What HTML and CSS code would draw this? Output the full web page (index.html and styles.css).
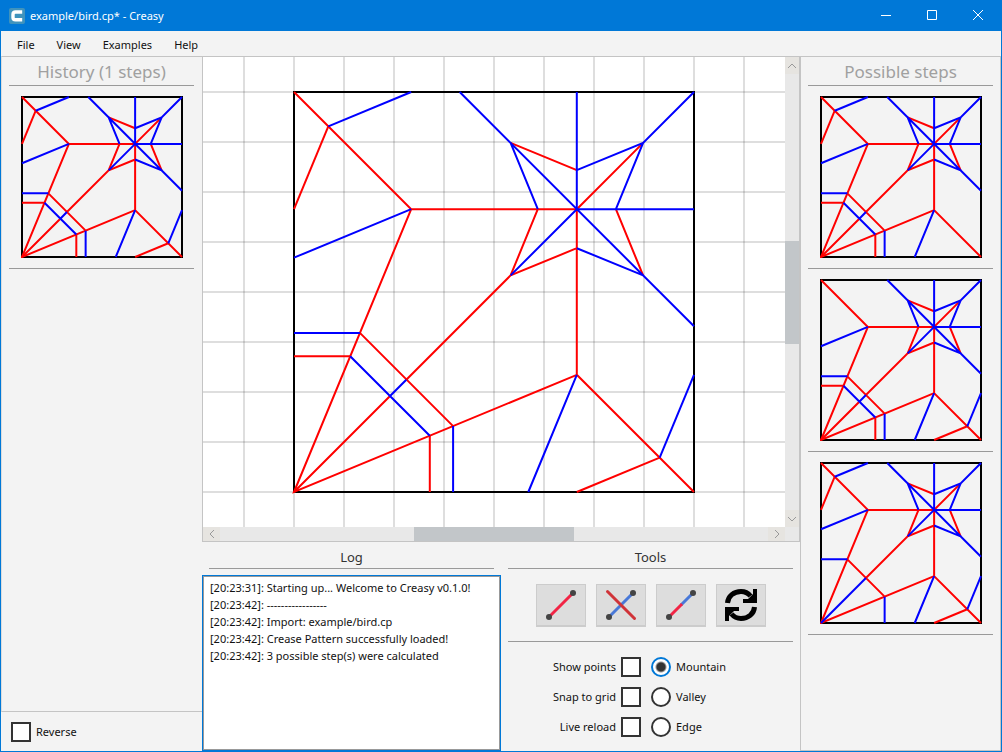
FILE: index.html
```html
<!DOCTYPE html>
<html lang="en">
<head>
<meta charset="utf-8">
<title>example/bird.cp* - Creasy</title>
<link rel="stylesheet" href="styles.css">
</head>
<body>
<svg class="defs" aria-hidden="true">
  <defs>
    <pattern id="grid" width="50" height="50" patternUnits="userSpaceOnUse">
      <path class="grid-line" d="M0 0V50M50 0V50"/>
      <path class="grid-line" d="M0 0H50M0 50H50"/>
    </pattern>
    <g id="frame"><path class="edge" d="M0 0H400V400H0Z"/></g>
    <g id="base">
      <path class="mountain" d="M0 0L117.2 117.2H282.8V282.8L400 400M117.2 117.2L0 400L282.8 282.8M112.3 287.7L216.6 183.4L282.8 156.2M216.6 183.4L243.8 117.2M216.6 50.9L282.8 78.1M282.8 117.2L349.1 50.9M321.9 117.2L349.1 183.4M65.9 240.9L159.1 334.1"/>
      <path class="valley" d="M117.2 117.2L0 165.7M165.7 0L400 234.3M282.8 0V117.2H400M400 0L349.1 50.9L282.8 78.1M349.1 50.9L321.9 117.2M349.1 183.4L282.8 156.2M216.6 183.4L282.8 117.2M243.8 117.2L216.6 50.9M282.8 282.8L234.3 400M0 240.9H65.9M159.1 334.1V400"/>
    </g>
    <g id="top-fold">
      <path class="mountain" d="M34.3 34.3L0 117.2"/>
      <path class="valley" d="M34.3 34.3L117.2 0"/>
    </g>
    <g id="corner-fold">
      <path class="mountain" d="M365.7 365.7L282.8 400"/>
      <path class="valley" d="M365.7 365.7L400 282.8"/>
    </g>
    <g id="pleat">
      <path class="mountain" d="M0 264.2H56.2M135.8 343.8V400M0 400L95.8 304.2"/>
      <path class="valley" d="M56.2 264.2L135.8 343.8M95.8 304.2L112.3 287.7"/>
    </g>
    <g id="flat-tip"><path class="valley" d="M0 400L112.3 287.7"/></g>
  </defs>
</svg>

<div class="window">
  <header class="titlebar">
    <svg class="logo" viewBox="0 0 16 16" aria-hidden="true">
      <rect class="logo-bg" width="16" height="16" rx="2"/>
      <path class="logo-c" d="M13.2 4H6.5Q4 4 4 6.4V9.4Q4 11.8 6.5 11.8H13.2"/>
    </svg>
    <h1 class="title">example/bird.cp* - Creasy</h1>
    <div class="window-buttons">
      <button aria-label="Minimize"><svg viewBox="0 0 12 12"><path d="M1 5.5H11"/></svg></button>
      <button aria-label="Maximize"><svg viewBox="0 0 12 12"><path d="M1.5 .5H10.5V9.5H1.5Z"/></svg></button>
      <button aria-label="Close"><svg viewBox="0 0 12 12"><path d="M1 0L11 10M11 0L1 10"/></svg></button>
    </div>
  </header>

  <nav class="menubar">
    <button>File</button><button>View</button><button>Examples</button><button>Help</button>
  </nav>

  <main class="workspace">
    <aside class="side history">
      <div class="steps">
        <h2>History (1 steps)</h2>
        <div class="step"><svg viewBox="-2.5 -2.5 405 405"><use href="#frame"/><use href="#base"/><use href="#top-fold"/><use href="#corner-fold"/><use href="#pleat"/></svg></div>
      </div>
      <div class="reverse"><label class="option"><input type="checkbox">Reverse</label></div>
    </aside>

    <section class="center">
      <div class="viewport">
        <svg class="canvas" viewBox="-91 -35 582 470" preserveAspectRatio="xMidYMid slice">
          <rect x="-200" y="-200" width="800" height="800" fill="url(#grid)"/>
          <use href="#frame"/><use href="#base"/><use href="#top-fold"/><use href="#corner-fold"/><use href="#pleat"/>
        </svg>
        <div class="scroll vertical">
          <button aria-label="Scroll up"><svg viewBox="0 0 10 10"><path d="M1 7L5 3L9 7"/></svg></button>
          <div class="track"><div class="thumb"></div></div>
          <button aria-label="Scroll down"><svg viewBox="0 0 10 10"><path d="M1 3L5 7L9 3"/></svg></button>
        </div>
        <div class="scroll horizontal">
          <button aria-label="Scroll left"><svg viewBox="0 0 10 10"><path d="M7 1L3 5L7 9"/></svg></button>
          <div class="track"><div class="thumb"></div></div>
          <button aria-label="Scroll right"><svg viewBox="0 0 10 10"><path d="M3 1L7 5L3 9"/></svg></button>
        </div>
        <div class="scroll-corner"></div>
      </div>

      <div class="bottom">
        <section class="log">
          <h3>Log</h3>
          <textarea aria-label="Log" readonly>[20:23:31]: Starting up... Welcome to Creasy v0.1.0!
[20:23:42]: -----------------
[20:23:42]: Import: example/bird.cp
[20:23:42]: Crease Pattern successfully loaded!
[20:23:42]: 3 possible step(s) were calculated</textarea>
        </section>
        <section class="tools">
          <h3>Tools</h3>
          <div class="toolbar">
            <button aria-label="Add crease"><svg viewBox="0 0 32 32"><path class="red" d="M4 28L28 4"/><circle cx="4" cy="28" r="3"/><circle cx="28" cy="4" r="3"/></svg></button>
            <button aria-label="Delete crease"><svg viewBox="0 0 32 32"><path class="blue" d="M4 28L28 4"/><circle cx="4" cy="28" r="3"/><circle cx="28" cy="4" r="3"/><path class="cross" d="M2.5 2.5L29.5 29.5"/></svg></button>
            <button aria-label="Change crease type"><svg viewBox="0 0 32 32"><path class="blue" d="M16 16L28 4"/><path class="red" d="M4 28L17 15"/><circle cx="4" cy="28" r="3"/><circle cx="28" cy="4" r="3"/></svg></button>
            <button aria-label="Recalculate steps"><svg viewBox="0 0 32 32"><path class="arc" d="M2.5 14C3 7 9 2.6 16 2.6C20 2.6 23 4 25.5 7M29.5 18C29 25 23 29.4 16 29.4C12 29.4 9 28 6.5 25"/><path class="tip" d="M32 0V14H18V10H23L28 5V0ZM0 32V18H14V22H9L4 27V32Z"/></svg></button>
          </div>
          <div class="options">
            <label class="option before">Show points<input type="checkbox"></label>
            <label class="option"><input type="radio" name="type" checked>Mountain</label>
            <label class="option before">Snap to grid<input type="checkbox"></label>
            <label class="option"><input type="radio" name="type">Valley</label>
            <label class="option before">Live reload<input type="checkbox"></label>
            <label class="option"><input type="radio" name="type">Edge</label>
          </div>
        </section>
      </div>
    </section>

    <aside class="side possible">
      <div class="steps">
        <h2>Possible steps</h2>
        <div class="step"><svg viewBox="-2.5 -2.5 405 405"><use href="#frame"/><use href="#base"/><use href="#top-fold"/><use href="#pleat"/></svg></div>
        <div class="step"><svg viewBox="-2.5 -2.5 405 405"><use href="#frame"/><use href="#base"/><use href="#corner-fold"/><use href="#pleat"/></svg></div>
        <div class="step"><svg viewBox="-2.5 -2.5 405 405"><use href="#frame"/><use href="#base"/><use href="#top-fold"/><use href="#corner-fold"/><use href="#flat-tip"/></svg></div>
      </div>
    </aside>
  </main>
</div>
</body>
</html>
```

FILE: styles.css
```css
* { box-sizing: border-box; }
body {
  margin: 0;
  font: 11px/16px "Noto Sans", "Open Sans", sans-serif;
  color: #111;
}
button { font: inherit; color: inherit; border: 0; background: none; padding: 0; }
svg { display: block; }
.defs { position: absolute; width: 0; height: 0; }

.window {
  display: flex;
  flex-direction: column;
  height: 100vh;
  border: 1px solid #0078d7;
  background: #f3f3f3;
}

.titlebar {
  display: flex;
  align-items: center;
  height: 30px;
  padding-left: 8px;
  background: #0078d7;
  color: #fff;
}
.logo { width: 16px; height: 16px; }
.logo-bg { fill: #3f93bd; }
.logo-c { fill: none; stroke: #fff; stroke-width: 3.4; }
.title { flex: 1; margin: 0 0 0 5px; font-size: 11px; font-weight: 400; }
.window-buttons { display: flex; }
.window-buttons button {
  display: grid;
  place-items: center;
  width: 46px;
  height: 28px;
}
.window-buttons svg { width: 12px; height: 12px; fill: none; stroke: #fff; }

.menubar { display: flex; height: 25px; padding-left: 5px; }
.menubar button { padding: 2px 11px 0; }

.workspace {
  flex: 1;
  min-height: 0;
  display: grid;
  grid-template-columns: 201px minmax(0, 1fr) 201px;
}
.side { display: flex; flex-direction: column; min-height: 0; }
.steps { flex: 1; border: 1px solid #c4c4c4; }
.history .steps { border-left-color: #dcdcdc; border-right: 0; padding-right: 1px; }
.steps h2 {
  margin: 0 7px 10px;
  padding-top: 2px;
  border-bottom: 1px solid #999;
  font-size: 17px;
  font-weight: 400;
  line-height: 26px;
  text-align: center;
  color: #a0a0a0;
}
.step {
  margin: 0 7px 10px;
  padding-bottom: 10px;
  border-bottom: 1px solid #999;
}
.step svg { width: 162px; height: 162px; margin: 0 auto; }
.reverse { height: 39px; padding: 10px; }

.edge, .mountain, .valley {
  fill: none;
  stroke-width: 2px;
  vector-effect: non-scaling-stroke;
}
.edge { stroke: #000; }
.mountain { stroke: #f00; }
.valley { stroke: #00f; }
.grid-line { stroke: rgba(0, 0, 0, .13); stroke-width: 2px; fill: none; }

.center { display: flex; flex-direction: column; min-width: 0; min-height: 0; }
.viewport {
  flex: 1;
  min-height: 0;
  display: grid;
  grid-template: minmax(0, 1fr) 14px / minmax(0, 1fr) 14px;
  border: 1px solid #c4c4c4;
}
.canvas { width: 100%; height: 100%; background: #fff; }
.scroll { display: flex; background: #e8e8e8; }
.vertical { flex-direction: column; }
.scroll button { display: grid; place-items: center; background: #e6e4e0; }
.vertical button { height: 17px; }
.horizontal button { width: 17px; }
.scroll svg { width: 10px; height: 10px; fill: none; stroke: #999; }
.track { flex: 1; display: flex; }
.vertical .track { flex-direction: column; justify-content: center; }
.horizontal .track { justify-content: center; }
.thumb { background: #c2c6c9; }
.vertical .thumb { height: 103px; }
.horizontal .thumb { width: 160px; }
.scroll-corner { background: #e8e8e8; }

.bottom { display: grid; grid-template-columns: 1fr 1fr; height: 209px; }
.log { display: flex; flex-direction: column; }
.bottom h3 {
  margin: 0 7px;
  padding: 5px 0 1px;
  border-bottom: 1px solid #999;
  font-size: 13px;
  font-weight: 400;
  line-height: 20px;
  text-align: center;
  color: #333;
}
.log textarea {
  flex: 1;
  margin: 6px 0 0;
  padding: 3px 7px;
  border: 1px solid #0078d7;
  outline: 1px solid #999;
  outline-offset: -2px;
  background: #fff;
  color: #111;
  font: inherit;
  line-height: 17px;
  resize: none;
}
.toolbar {
  display: flex;
  justify-content: center;
  gap: 10px;
  margin: 0 7px;
  padding: 15px 0 14px;
  border-bottom: 1px solid #999;
}
.toolbar button {
  display: grid;
  place-items: center;
  width: 50px;
  height: 43px;
  border: 1px solid #ccc;
  border-bottom-width: 2px;
  background: #ddd;
}
.toolbar svg { width: 32px; height: 32px; fill: #444; }
.toolbar path { stroke-width: 3; fill: none; }
.toolbar .red { stroke: #f22445; }
.toolbar .blue { stroke: #4878d8; }
.toolbar .cross { stroke: #d03338; stroke-linecap: round; }
.toolbar .arc { stroke: #000; stroke-width: 5; }
.toolbar .tip { fill: #000; }
.options {
  display: grid;
  grid-template-columns: 140px 1fr;
  gap: 10px;
  margin-top: 15px;
}
.option { display: flex; align-items: center; gap: 5px; height: 20px; }
.before { justify-content: flex-end; }
.option input {
  appearance: none;
  width: 20px;
  height: 20px;
  margin: 0;
  border: 2px solid #333;
  background: #fff;
}
.option input[type="radio"] { border-radius: 50%; }
.option input[type="radio"]:checked {
  border-color: #0078d7;
  background: radial-gradient(circle, #333 4px, #fff 6px);
}
```
